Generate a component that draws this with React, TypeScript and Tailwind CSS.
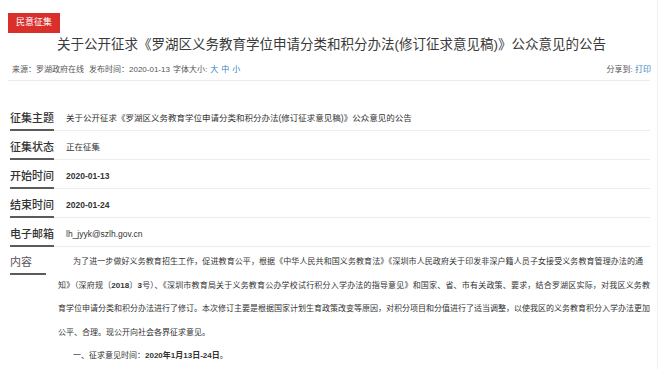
const rows: { label: string; value: string; strong?: boolean }[] = [
  {
    label: "征集主题",
    value: "关于公开征求《罗湖区义务教育学位申请分类和积分办法(修订征求意见稿)》公众意见的公告",
  },
  { label: "征集状态", value: "正在征集" },
  { label: "开始时间", value: "2020-01-13", strong: true },
  { label: "结束时间", value: "2020-01-24", strong: true },
  { label: "电子邮箱", value: "lh_jyyk@szlh.gov.cn" },
];

function Line({ children, className = "" }: { children: React.ReactNode; className?: string }) {
  return <div className={"text-justify [text-align-last:justify] whitespace-nowrap " + className}>{children}</div>;
}

export default function App() {
  return (
    <div className="w-[660px] h-[369px] overflow-hidden bg-white font-['Liberation_Sans','Noto_Sans_CJK_SC',sans-serif] text-[#333]">
      <div className="w-[658px] h-full border-r border-[#efefef]">
        {/* badge */}
        <div className="pt-[13px] pl-[8px]">
          <div className="w-[52px] h-[20px] bg-[#d9302c] text-white text-[9px] flex items-center justify-center">
            民意征集
          </div>
        </div>

        {/* title */}
        <h1 className="mt-[2px] pl-[57px] text-[13.5px] leading-[20px] text-[#3a3a3a] whitespace-nowrap">
          关于公开征求《罗湖区义务教育学位申请分类和积分办法(修订征求意见稿)》公众意见的公告
        </h1>

        {/* meta */}
        <div className="mt-[9px] flex justify-between pl-[12px] pr-[6px] text-[8px] leading-[12px] text-[#555]">
          <div className="flex">
            <span>来源：罗湖政府在线</span>
            <span className="ml-[5px]">发布时间：2020-01-13</span>
            <span className="ml-[3px]">字体大小:</span>
            <span className="ml-[3px] text-[#3d7fc1] flex gap-[3px]">
              <span>大</span>
              <span>中</span>
              <span>小</span>
            </span>
          </div>
          <div>
            分享到: <span className="text-[#3d7fc1]">打印</span>
          </div>
        </div>
        <div className="mt-[4px] ml-[8px] mr-[7px] h-px bg-[#ebebeb]" />

        {/* info rows */}
        <div className="mt-[21px]">
          {rows.map((r) => (
            <div key={r.label} className="flex items-end h-[29px] pl-[10px] pr-[7px]">
              <div className="w-[44px] border-b-2 border-[#5b5b5b] text-[11px] leading-[14px] pb-[4px] font-medium text-[#333] whitespace-nowrap">
                {r.label}
              </div>
              <div className="flex-1 h-full border-b border-[#ececec] flex items-end pb-[6px] pl-[12px]">
                <span className={"text-[8.5px] leading-[12px] whitespace-nowrap " + (r.strong ? "font-bold" : "")}>
                  {r.value}
                </span>
              </div>
            </div>
          ))}

          {/* content */}
          <div className="flex items-start pl-[10px] pr-[7px]">
            <div className="mt-[8px] w-[44px] border-b-2 border-[#5b5b5b] text-[11px] leading-[14px] pb-[4px] text-[#555]">
              内容
            </div>
            <div className="flex-1 pl-[12px] pt-[3px] text-[8px] leading-[23.5px] text-[#333]">
              <Line className="pl-[15px] pr-[7px]">
                为了进一步做好义务教育招生工作，促进教育公平，根据《中华人民共和国义务教育法》《深圳市人民政府关于印发非深户籍人员子女接受义务教育管理办法的通
              </Line>
              <Line>
                知》（深府规〔<b>2018</b>〕<b>3</b>号）、《深圳市教育局关于义务教育公办学校试行积分入学办法的指导意见》和国家、省、市有关政策、要求，结合罗湖区实际，对我区义务教
              </Line>
              <Line>
                育学位申请分类和积分办法进行了修订。本次修订主要是根据国家计划生育政策改变等原因，对积分项目和分值进行了适当调整，以使我区的义务教育积分入学办法更加
              </Line>
              <div>公平、合理。现公开向社会各界征求意见。</div>
              <div className="pl-[15px]">
                一、征求意见时间：<b>2020年1月13日-24日</b>。
              </div>
            </div>
          </div>
        </div>
      </div>
    </div>
  );
}
